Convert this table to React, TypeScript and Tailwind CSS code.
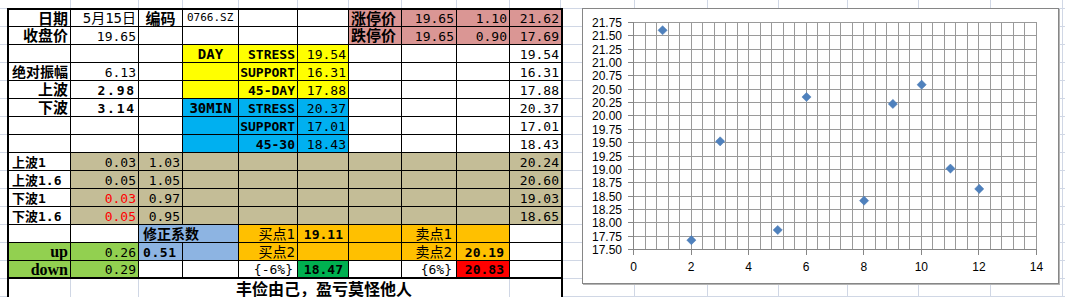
import type { ReactNode } from "react";
import { twMerge } from "tailwind-merge";

const cjk = "font-['Noto_Sans_CJK_SC',sans-serif]";
const head = "font-['Noto_Sans_CJK_SC',sans-serif] font-bold text-[15px] pt-0";

const pink = "bg-[#da9694]";
const yellow = "bg-[#ffff00]";
const sky = "bg-[#00b0f0]";
const tan = "bg-[#c4bd97]";
const steel = "bg-[#8db4e2]";
const amber = "bg-[#ffc000]";
const lime = "bg-[#92d050]";

// price levels plotted on the chart (x = row index)
const points: [number, number][] = [
  [1, 21.62],
  [2, 17.69],
  [3, 19.54],
  [4, 16.31],
  [5, 17.88],
  [6, 20.37],
  [7, 17.01],
  [8, 18.43],
  [9, 20.24],
  [10, 20.6],
  [11, 19.03],
  [12, 18.65],
];

const waves = [
  { label: "上波1", pct: "0.03", k: "1.03", price: "20.24", down: false },
  { label: "上波1.6", pct: "0.05", k: "1.05", price: "20.60", down: false },
  { label: "下波1", pct: "0.03", k: "0.97", price: "19.03", down: true },
  { label: "下波1.6", pct: "0.05", k: "0.95", price: "18.65", down: true },
];

const sideCols = ["w-[72px]", "w-[73px]", "w-[71px]", "w-[69px]", "w-[71px]", "w-[72px]", "w-[72px]"];

function Cell({ children, className, end }: { children?: ReactNode; className?: string; end?: boolean }) {
  return (
    <div
      className={twMerge(
        "flex items-center justify-end overflow-hidden whitespace-nowrap border-b border-r border-black bg-white px-[2px] pt-[1px] leading-none",
        end && "border-r-0",
        className
      )}
    >
      {children}
    </div>
  );
}

const L = 633;
const R = 1036;
const T = 22;
const B = 249;
const px = (u: number) => L + (u / 14) * (R - L);
const py = (v: number) => T + ((21.75 - v) / 4.25) * (B - T);

function Chart() {
  const rows = Array.from({ length: 18 }, (_, k) => k);
  const cols = Array.from({ length: 36 }, (_, j) => j);
  const majors = [0, 2, 4, 6, 8, 10, 12, 14];

  return (
    <div className="absolute left-[582px] top-[8px] h-[276px] w-[477px] border border-[#868686] bg-white shadow-[1px_1px_0_#b4b4b4]">
      <svg width={475} height={274} viewBox="583 9 475 274" className="block">
        <g stroke="#9a9a9a" strokeWidth={1} shapeRendering="crispEdges">
          {rows.map((k) => {
            const y = Math.round(T + (k * (B - T)) / 17) + 0.5;
            return <line key={k} x1={L} x2={R + 1} y1={y} y2={y} />;
          })}
          {cols.map((j) => {
            const x = Math.round(L + (j * (R - L)) / 35) + 0.5;
            return <line key={j} x1={x} x2={x} y1={T} y2={B} />;
          })}
        </g>
        <g stroke="#868686" strokeWidth={1} shapeRendering="crispEdges">
          <line x1={L + 0.5} x2={L + 0.5} y1={T} y2={B + 1} />
          <line x1={L} x2={R + 1} y1={B + 0.5} y2={B + 0.5} />
          {rows.map((k) => {
            const y = Math.round(T + (k * (B - T)) / 17) + 0.5;
            return <line key={k} x1={628} x2={L} y1={y} y2={y} />;
          })}
          {majors.map((u) => {
            const x = Math.round(px(u)) + 0.5;
            return <line key={u} x1={x} x2={x} y1={B} y2={B + 6} />;
          })}
        </g>
        <g fontFamily="'Liberation Sans', Arial, sans-serif" fontSize={12} fill="#000">
          {rows.map((k) => (
            <text key={k} x={622} y={Math.round(T + (k * (B - T)) / 17) + 4.5} textAnchor="end">
              {(21.75 - k * 0.25).toFixed(2)}
            </text>
          ))}
          {majors.map((u) => (
            <text key={u} x={px(u) + 0.5} y={271} textAnchor="middle">
              {u}
            </text>
          ))}
        </g>
        <g fill="#4f81bd" stroke="#4a7ab5" strokeWidth={0.5}>
          {points
            .filter(([, v]) => v >= 17.5 && v <= 21.75)
            .map(([u, v]) => {
              const cx = px(u) + 0.8;
              const cy = py(v) + 1.3;
              const s = 4.6;
              return (
                <polygon
                  key={u}
                  points={`${cx},${cy - s} ${cx + s},${cy} ${cx},${cy + s} ${cx - s},${cy}`}
                />
              );
            })}
        </g>
      </svg>
    </div>
  );
}

export default function App() {
  return (
    <div className="relative flex h-[297px] w-[1065px] overflow-hidden bg-white bg-[repeating-linear-gradient(180deg,transparent_0,transparent_8px,#d0d7e5_8px,#d0d7e5_9px,transparent_9px,transparent_18px)]">
      <div className="w-[7px] shrink-0" />

      <div className="flex h-[297px] w-[556px] shrink-0 flex-col">
        <div className="grid h-[8px] shrink-0 grid-cols-[62px_68px_44px_56px_59px_51px_53px_55px_53px_51px] px-[2px]">
          {Array.from({ length: 10 }, (_, i) => (
            <div key={i} className="border-r border-[#d0d7e5]" />
          ))}
        </div>

        <div className="grid shrink-0 grid-cols-[62px_68px_44px_56px_59px_51px_53px_55px_53px_51px] grid-rows-[17px_repeat(14,18px)] border-x-2 border-t-2 border-black bg-white font-['DejaVu_Sans_Mono','Noto_Sans_CJK_SC',monospace] text-[13px] text-black">
          {/* row 1 */}
          <Cell className={head}>日期</Cell>
          <Cell className="text-[14px]">5月15日</Cell>
          <Cell className={`${head} justify-center`}>编码</Cell>
          <Cell className="justify-start pl-[4px] text-[11px]">0766.SZ</Cell>
          <Cell />
          <Cell />
          <Cell className={`${head} ${pink} justify-start`}>涨停价</Cell>
          <Cell className={pink}>19.65</Cell>
          <Cell className={pink}>1.10</Cell>
          <Cell className={pink} end>
            21.62
          </Cell>

          {/* row 2 */}
          <Cell className={head}>收盘价</Cell>
          <Cell>19.65</Cell>
          <Cell />
          <Cell />
          <Cell />
          <Cell />
          <Cell className={`${head} ${pink} justify-start`}>跌停价</Cell>
          <Cell className={pink}>19.65</Cell>
          <Cell className={pink}>0.90</Cell>
          <Cell className={pink} end>
            17.69
          </Cell>

          {/* row 3 */}
          <Cell />
          <Cell />
          <Cell />
          <Cell className={`${yellow} justify-center text-[14px] font-bold`}>DAY</Cell>
          <Cell className={`${yellow} font-bold`}>STRESS</Cell>
          <Cell className={yellow}>19.54</Cell>
          <Cell />
          <Cell />
          <Cell />
          <Cell end>19.54</Cell>

          {/* row 4 */}
          <Cell className={`${cjk} pt-0 text-[14px] font-bold`}>绝对振幅</Cell>
          <Cell>6.13</Cell>
          <Cell />
          <Cell className={yellow} />
          <Cell className={`${yellow} font-bold`}>SUPPORT</Cell>
          <Cell className={yellow}>16.31</Cell>
          <Cell />
          <Cell />
          <Cell />
          <Cell end>16.31</Cell>

          {/* row 5 */}
          <Cell className={head}>上波</Cell>
          <Cell className="font-bold tracking-[1.8px]">2.98</Cell>
          <Cell />
          <Cell className={yellow} />
          <Cell className={`${yellow} font-bold`}>45-DAY</Cell>
          <Cell className={yellow}>17.88</Cell>
          <Cell />
          <Cell />
          <Cell />
          <Cell end>17.88</Cell>

          {/* row 6 */}
          <Cell className={head}>下波</Cell>
          <Cell className="font-bold tracking-[1.8px]">3.14</Cell>
          <Cell />
          <Cell className={`${sky} justify-center text-[14px] font-bold`}>30MIN</Cell>
          <Cell className={`${sky} font-bold`}>STRESS</Cell>
          <Cell className={sky}>20.37</Cell>
          <Cell />
          <Cell />
          <Cell />
          <Cell end>20.37</Cell>

          {/* row 7 */}
          <Cell />
          <Cell />
          <Cell />
          <Cell className={sky} />
          <Cell className={`${sky} font-bold`}>SUPPORT</Cell>
          <Cell className={sky}>17.01</Cell>
          <Cell />
          <Cell />
          <Cell />
          <Cell end>17.01</Cell>

          {/* row 8 */}
          <Cell />
          <Cell />
          <Cell />
          <Cell className={sky} />
          <Cell className={`${sky} font-bold`}>45-30</Cell>
          <Cell className={sky}>18.43</Cell>
          <Cell />
          <Cell />
          <Cell />
          <Cell end>18.43</Cell>

          {/* rows 9-12: wave multipliers */}
          {waves.map((w) => (
            <div key={w.label} className="contents">
              <Cell className="justify-start pl-[3px] font-bold">{w.label}</Cell>
              <Cell className={`${tan} ${w.down ? "text-[#ff0000]" : ""}`}>{w.pct}</Cell>
              <Cell className={tan}>{w.k}</Cell>
              <Cell className={tan} />
              <Cell className={tan} />
              <Cell className={tan} />
              <Cell className={tan} />
              <Cell className={tan} />
              <Cell className={tan} />
              <Cell className={tan} end>
                {w.price}
              </Cell>
            </div>
          ))}

          {/* row 13 */}
          <Cell />
          <Cell />
          <Cell className={`${cjk} ${steel} col-span-2 justify-start pl-[4px] pt-0 text-[14px] font-bold`}>修正系数</Cell>
          <Cell className={`${amber} text-[14px]`}>买点1</Cell>
          <Cell className={`${amber} pr-[5px] font-bold`}>19.11</Cell>
          <Cell className={amber} />
          <Cell className={`${amber} pr-[4px] text-[14px]`}>卖点1</Cell>
          <Cell className={amber} />
          <Cell end />

          {/* row 14 */}
          <Cell className={`${lime} font-['Liberation_Serif',serif] text-[16px] font-bold`}>up</Cell>
          <Cell className={lime}>0.26</Cell>
          <Cell className={`${steel} justify-start pl-[4px] font-bold tracking-[0.6px]`}>0.51</Cell>
          <Cell className={steel} />
          <Cell className={`${amber} text-[14px]`}>买点2</Cell>
          <Cell className={amber} />
          <Cell className={amber} />
          <Cell className={`${amber} pr-[4px] text-[14px]`}>卖点2</Cell>
          <Cell className={`${amber} pr-[5px] font-bold`}>20.19</Cell>
          <Cell end />

          {/* row 15 */}
          <Cell className={`${lime} border-b-2 font-['Liberation_Serif',serif] text-[16px] font-bold`}>down</Cell>
          <Cell className={`${lime} border-b-2`}>0.29</Cell>
          <Cell className="border-b-2" />
          <Cell className="border-b-2" />
          <Cell className="border-b-2 pr-[4px]">{"{-6%}"}</Cell>
          <Cell className="border-b-2 bg-[#00b050] pr-[5px] font-bold">18.47</Cell>
          <Cell className="border-b-2" />
          <Cell className="border-b-2 pr-[4px]">{"{6%}"}</Cell>
          <Cell className="border-b-2 bg-[#ff0000] pr-[5px] font-bold">20.83</Cell>
          <Cell className="border-b-2" end />
        </div>

        {/* motto row below the thick rule */}
        <div className="grid h-[18px] shrink-0 grid-cols-[62px_68px_371px_51px] border-x-2 border-black bg-white">
          <div className="border-r border-[#d0d7e5]" />
          <div className="border-r border-[#d0d7e5]" />
          <div className="flex items-center justify-center border-r border-[#d0d7e5] font-['Noto_Sans_CJK_SC',sans-serif] text-[16px] leading-[18px] font-bold whitespace-nowrap text-black">
            丰俭由己，盈亏莫怪他人
          </div>
          <div />
        </div>
      </div>

      {sideCols.map((w, i) => (
        <div key={i} className={`${w} h-full shrink-0 border-r border-[#d0d7e5]`} />
      ))}

      <Chart />
    </div>
  );
}
